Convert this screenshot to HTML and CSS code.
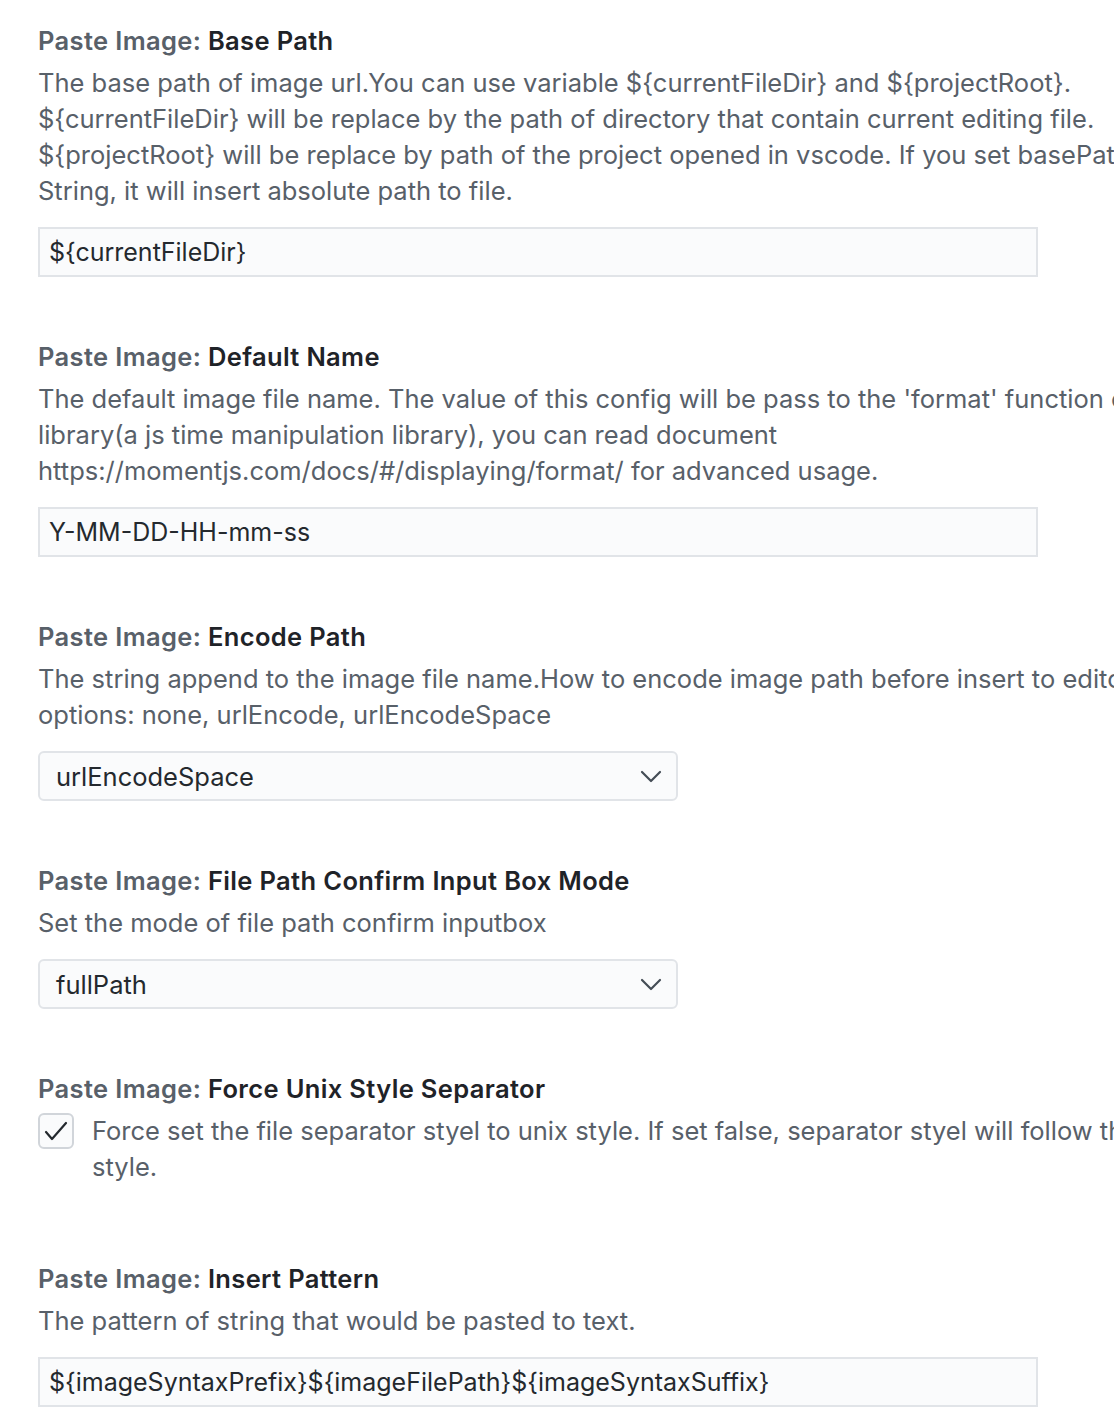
FILE: index.html
```html
<!DOCTYPE html>
<html>
<head>
<meta charset="utf-8">
<link rel="stylesheet" href="styles.css">
</head>
<body>
<div class="page">
  <div class="setting">
    <div class="title"><span class="cat">Paste Image: </span><span class="name">Base Path</span></div>
    <div class="desc">The base path of image url.You can use variable ${currentFileDir} and ${projectRoot}. ${currentFileDir} will be replace by the path of directory that contain current editing file. ${projectRoot} will be replace by path of the project opened in vscode. If you set basePath to empty String, it will insert absolute path to file.</div>
    <div class="textbox">${currentFileDir}</div>
  </div>
  <div class="setting">
    <div class="title"><span class="cat">Paste Image: </span><span class="name">Default Name</span></div>
    <div class="desc">The default image file name. The value of this config will be pass to the 'format' function of moment library(a js time manipulation library), you can read document https://momentjs.com/docs/#/displaying/format/ for advanced usage.</div>
    <div class="textbox">Y-MM-DD-HH-mm-ss</div>
  </div>
  <div class="setting">
    <div class="title"><span class="cat">Paste Image: </span><span class="name">Encode Path</span></div>
    <div class="desc">The string append to the image file name.How to encode image path before insert to editor. Support options: none, urlEncode, urlEncodeSpace</div>
    <div class="select"><span>urlEncodeSpace</span><svg class="chev" width="22" height="14" viewBox="0 0 22 14"><polyline points="2,3 11,12 20,3" fill="none" stroke="#444d56" stroke-width="2.2" stroke-linecap="round" stroke-linejoin="round"/></svg></div>
  </div>
  <div class="setting">
    <div class="title"><span class="cat">Paste Image: </span><span class="name">File Path Confirm Input Box Mode</span></div>
    <div class="desc">Set the mode of file path confirm inputbox</div>
    <div class="select"><span>fullPath</span><svg class="chev" width="22" height="14" viewBox="0 0 22 14"><polyline points="2,3 11,12 20,3" fill="none" stroke="#444d56" stroke-width="2.2" stroke-linecap="round" stroke-linejoin="round"/></svg></div>
  </div>
  <div class="setting bool">
    <div class="title"><span class="cat">Paste Image: </span><span class="name">Force Unix Style Separator</span></div>
    <div class="checkrow">
      <div class="checkbox"><svg width="26" height="22" viewBox="0 0 26 22"><polyline points="3,12 9,19 23,3" fill="none" stroke="#24292e" stroke-width="2.2" stroke-linecap="round" stroke-linejoin="round"/></svg></div>
      <div class="desc checkdesc">Force set the file separator styel to unix style. If set false, separator styel will follow the system style.</div>
    </div>
  </div>
  <div class="setting">
    <div class="title"><span class="cat">Paste Image: </span><span class="name">Insert Pattern</span></div>
    <div class="desc">The pattern of string that would be pasted to text.</div>
    <div class="textbox">${imageSyntaxPrefix}${imageFilePath}${imageSyntaxSuffix}</div>
  </div>
</div>
</body>
</html>
```
FILE: styles.css
```css
html, body {
  margin: 0;
  padding: 0;
  background: #ffffff;
  overflow: hidden;
}
body {
  font-family: Inter, "Noto Sans", sans-serif;
  font-size: 25.5px;
  color: #24292e;
}
.page {
  width: 1225px;
  padding: 23px 0 0 38px;
}
.setting {
  margin-bottom: 62px;
}
.setting.bool {
  margin-bottom: 76px;
}
.title {
  line-height: 36px;
  font-weight: 600;
  letter-spacing: 0.35px;
  margin-bottom: 6px;
}
.cat {
  color: #586069;
}
.name {
  color: #1f2328;
}
.desc {
  line-height: 36px;
  color: #586069;
}
.textbox {
  box-sizing: border-box;
  width: 1000px;
  height: 50px;
  margin-top: 18px;
  padding: 0 9px;
  display: flex;
  align-items: center;
  background: #fafbfc;
  border: 2px solid #e1e4e8;
  color: #24292e;
  font-size: 25px;
}
.select {
  box-sizing: border-box;
  width: 640px;
  height: 50px;
  margin-top: 18px;
  padding: 0 14px 0 16px;
  display: flex;
  align-items: center;
  justify-content: space-between;
  background: #fafbfc;
  border: 2px solid #e1e4e8;
  border-radius: 6px;
  color: #24292e;
}
.checkrow {
  display: flex;
  align-items: flex-start;
  gap: 18px;
}
.checkbox {
  box-sizing: border-box;
  flex: none;
  width: 36px;
  height: 36px;
  border: 2px solid #d1d5da;
  border-radius: 6px;
  background: #fafbfc;
  display: flex;
  align-items: center;
  justify-content: center;
}
.checkdesc {
  flex: 1;
}
```
